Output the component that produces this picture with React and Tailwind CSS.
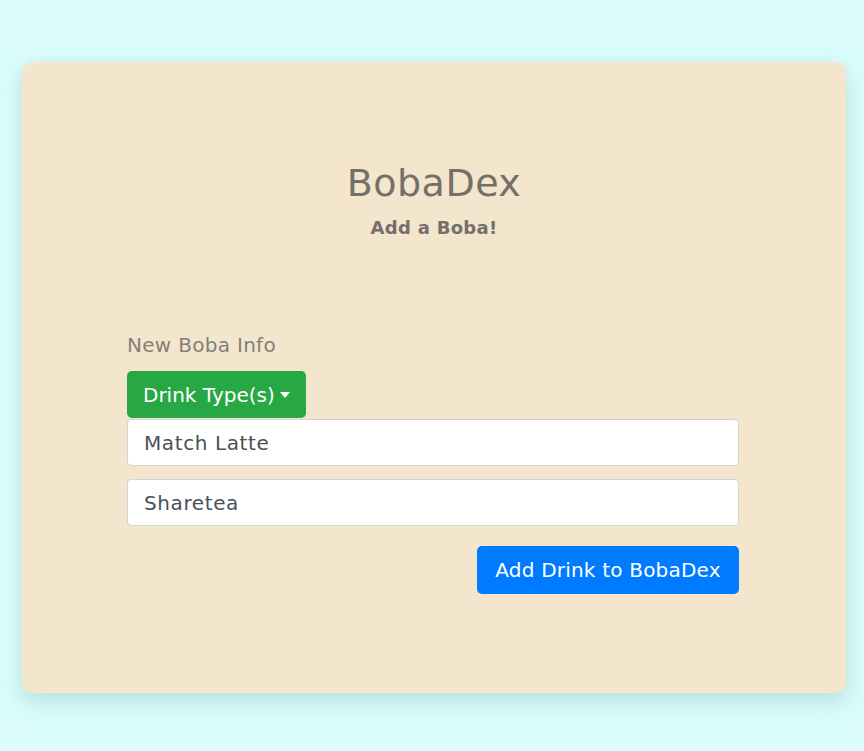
export default function App() {
  const font = { fontFamily: '"DejaVu Sans", "Noto Sans", sans-serif' };

  return (
    <div className="min-h-[751px] bg-[#dafcfc] pt-[62px] pl-[22px] pb-[58px]" style={font}>
      <div className="w-[824px] h-[631px] bg-[#f3e6cc] rounded-[10px] shadow-[0_8px_22px_rgba(120,170,170,0.35)] pt-[92px]">
        <div className="text-center text-[#756f6a]">
          <h1 className="text-[38px] leading-[58px] font-normal tracking-[0.5px]">BobaDex</h1>
          <p className="text-[18px] leading-[30px] font-bold mt-[1px] tracking-[0.3px]">Add a Boba!</p>
        </div>

        <div className="w-[612px] ml-[105px] mt-[87px]">
          <p className="text-[20px] leading-[30px] text-[#857f78] tracking-[0.3px]">New Boba Info</p>
          <button className="mt-[11px] h-[47px] pl-4 pr-[16px] whitespace-nowrap rounded-[5px] bg-[#28a745] text-white text-[20px] flex items-center gap-[5px]">
            Drink Type(s)
            <span className="w-0 h-0 border-l-[5px] border-r-[5px] border-t-[6px] border-l-transparent border-r-transparent border-t-white" />
          </button>
          <div className="h-[47px] mt-[1px] bg-white border border-[#ced4da] rounded-[4px] px-4 flex items-center text-[20px] text-[#495057] tracking-[0.6px]">
            Match Latte
          </div>
          <div className="mt-[13px] h-[47px] bg-white border border-[#ced4da] rounded-[4px] px-4 flex items-center text-[20px] text-[#495057] tracking-[0.6px]">
            Sharetea
          </div>
          <div className="flex justify-end mt-[20px]">
            <button className="h-[48px] w-[262px] whitespace-nowrap rounded-[5px] bg-[#007bff] text-white text-[20px] tracking-[0.2px]">
              Add Drink to BobaDex
            </button>
          </div>
        </div>
      </div>
    </div>
  );
}
